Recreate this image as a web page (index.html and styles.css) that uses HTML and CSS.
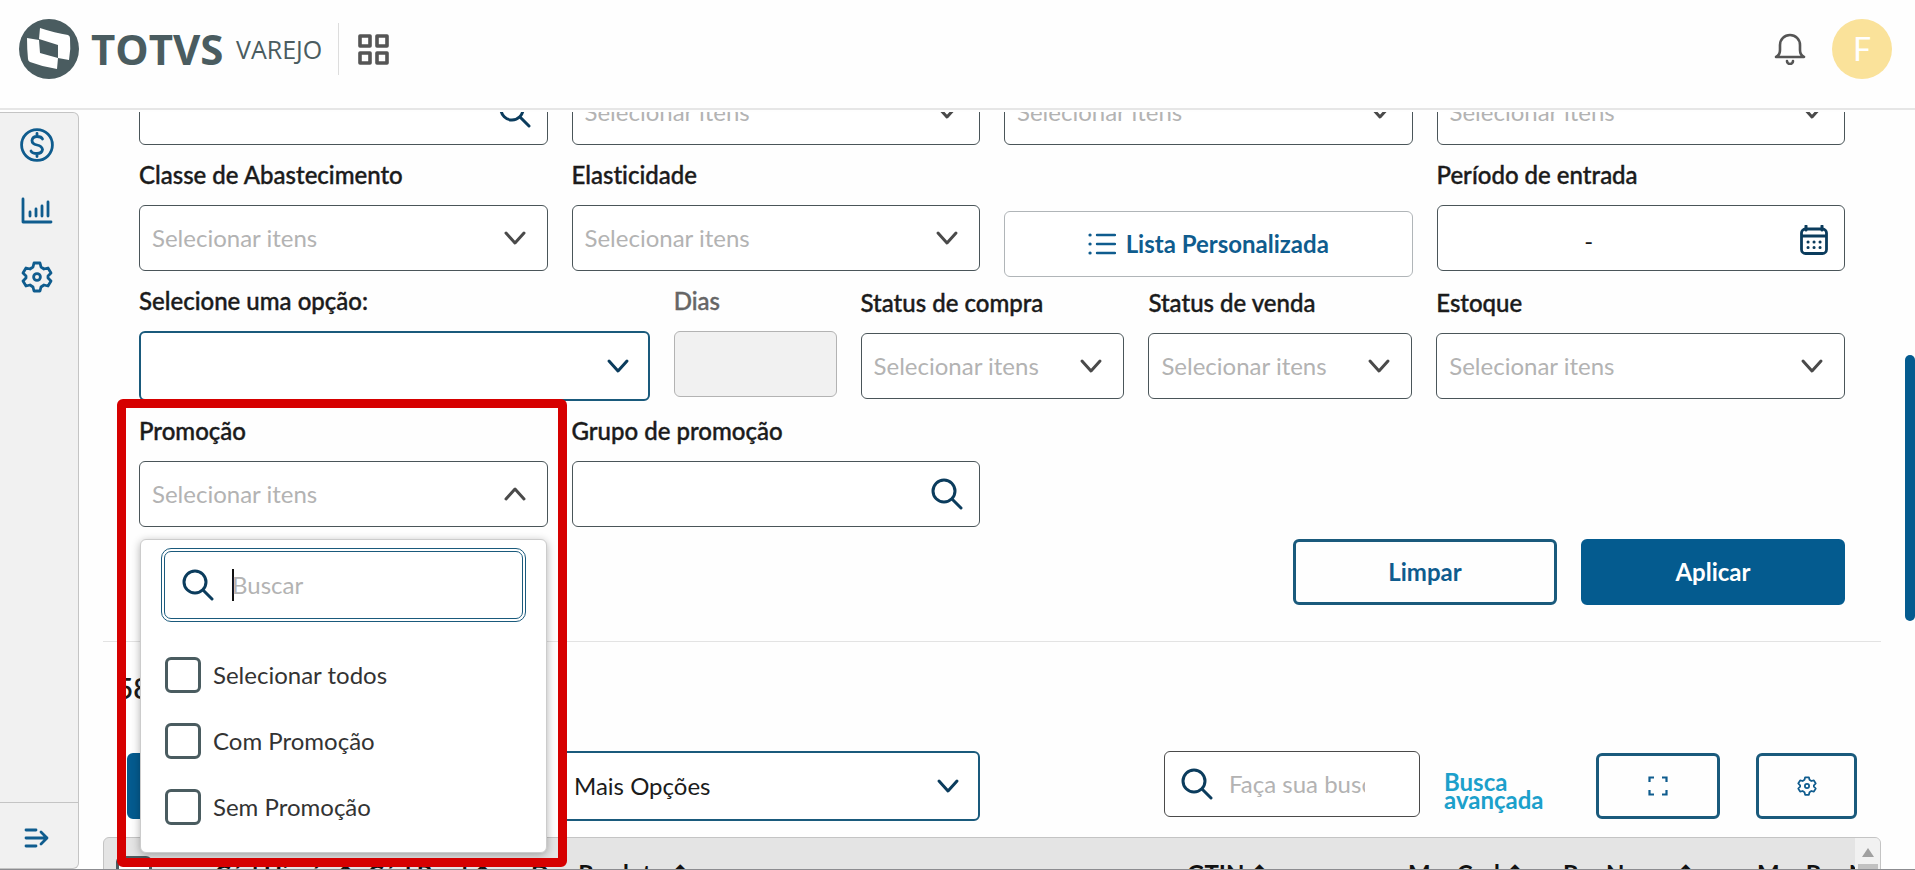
FILE: index.html
```html
<!DOCTYPE html>
<html lang="pt-BR">
<head>
<meta charset="utf-8">
<title>TOTVS Varejo</title>
<link rel="stylesheet" href="styles.css">
</head>
<body>
<svg class="sprite" aria-hidden="true">
  <symbol id="chevron" viewBox="0 0 24 24"><path d="M3 7l9 10 9-10" fill="none" stroke="currentColor" stroke-width="3" stroke-linecap="round" stroke-linejoin="round"/></symbol>
  <symbol id="search" viewBox="0 0 32 32"><circle cx="13" cy="13" r="11" fill="none" stroke="currentColor" stroke-width="3"/><path d="M21 21l9 9" stroke="currentColor" stroke-width="3" stroke-linecap="round"/></symbol>
  <symbol id="gear" viewBox="0 0 32 32"><path d="M13 2h6l1 4 3 2 4-1 3 5-3 3v2l3 3-3 5-4-1-3 2-1 4h-6l-1-4-3-2-4 1-3-5 3-3v-2l-3-3 3-5 4 1 3-2z" fill="none" stroke="currentColor" stroke-width="2.8" stroke-linejoin="round"/><circle cx="16" cy="16" r="3.4" fill="none" stroke="currentColor" stroke-width="2.8"/></symbol>
</svg>

<header class="topbar">
  <svg class="mark" viewBox="0 0 60 60" aria-hidden="true"><circle cx="30" cy="30" r="30" fill="#4a5c60"/><path d="M21 9q15 5 28 7 2 1 2 3 1 11-1 22l-11-2V26L20 20z" fill="#fff"/><path d="M8 19q6 1 12 2l1 13 18 5-1 11q-14-2-27-7-2-1-2-3Q8 30 8 19z" fill="#fff"/></svg>
  <span class="brand">TOTVS</span>
  <span class="product">VAREJO</span>
  <button class="apps" aria-label="Aplicativos"><svg viewBox="0 0 32 32"><path d="M3 3h10v10H3zM20 3h10v10H20zM3 20h10v10H3zM20 20h10v10H20z" fill="none" stroke="#555" stroke-width="3.6" stroke-linejoin="round"/></svg></button>
  <button class="bell" aria-label="Notificações"><svg viewBox="0 0 32 32"><path d="M2 24q4-2 4-7v-5a10 10 0 0 1 20 0v5q0 5 4 7z" fill="none" stroke="#555" stroke-width="2.6" stroke-linejoin="round"/><path d="M13 28a3 3 0 0 0 6 0" fill="none" stroke="#555" stroke-width="2.6" stroke-linecap="round"/></svg></button>
  <span class="avatar">F</span>
</header>

<div class="body">
  <nav class="side">
    <a href="#" aria-label="Preços"><svg class="i34" viewBox="0 0 34 34"><circle cx="17" cy="17" r="15.4" fill="none" stroke="currentColor" stroke-width="2.8"/><path d="M22.500 11q-1-2.500-5.500-2.500t-5 4q0 3.500 5 4.500t5.500 4.500q-.5 4-5.500 4t-6-2.500M17 5.500v3M17 25.500v3" fill="none" stroke="currentColor" stroke-width="2.800" stroke-linecap="round"/></svg></a>
    <a href="#" aria-label="Relatórios"><svg class="i32" viewBox="0 0 32 32"><path d="M2 4v23h28M9 21v-4M15 21v-7M21 21V11M27 21V7" fill="none" stroke="currentColor" stroke-width="2.8" stroke-linecap="round" stroke-linejoin="round"/></svg></a>
    <a href="#" aria-label="Configurações"><svg class="i32"><use href="#gear"/></svg></a>
    <button class="expand" aria-label="Expandir menu"><svg viewBox="0 0 26 22"><path d="M2 3h10M2 11h21M2 19h10M17 5l6 6-6 6" fill="none" stroke="currentColor" stroke-width="2.800" stroke-linecap="round" stroke-linejoin="round"/></svg></button>
  </nav>

  <main class="main">
    <form class="filters">
      <div class="row four scrolled">
        <div class="box"><input aria-label="Pesquisa"><svg class="lens"><use href="#search"/></svg></div>
        <button type="button" class="box">Selecionar itens<svg class="chev"><use href="#chevron"/></svg></button>
        <button type="button" class="box">Selecionar itens<svg class="chev"><use href="#chevron"/></svg></button>
        <button type="button" class="box">Selecionar itens<svg class="chev"><use href="#chevron"/></svg></button>
      </div>

      <div class="row four compact">
        <div class="field"><label for="classe">Classe de Abastecimento</label><button type="button" id="classe" class="box">Selecionar itens<svg class="chev"><use href="#chevron"/></svg></button></div>
        <div class="field"><label for="elast">Elasticidade</label><button type="button" id="elast" class="box">Selecionar itens<svg class="chev"><use href="#chevron"/></svg></button></div>
        <button type="button" class="box custom"><svg viewBox="0 0 28 24"><path d="M9 3h18M9 12h18M9 21h18" stroke="currentColor" stroke-width="2.400" stroke-linecap="round"/><path d="M2 3h.1M2 12h.1M2 21h.1" stroke="currentColor" stroke-width="3.200" stroke-linecap="round"/></svg>Lista Personalizada</button>
        <div class="field"><label for="periodo">Período de entrada</label><div class="box date"><input id="periodo" value="-"><svg viewBox="0 0 28 30"><path d="M6 1v4M22 1v4" stroke="currentColor" stroke-width="3" stroke-linecap="round"/><rect x="1.500" y="4" width="25" height="24.500" rx="4" fill="none" stroke="currentColor" stroke-width="2.800"/><path d="M1 11h26" stroke="currentColor" stroke-width="3"/><path d="M8 17h.1M14 17h.1M20 17h.1M8 22.500h.1M14 22.500h.1M20 22.500h.1" stroke="currentColor" stroke-width="3" stroke-linecap="round"/></svg></div></div>
      </div>

      <div class="row five">
        <div class="field"><label for="opcao">Selecione uma opção:</label><div class="box strong"><select id="opcao"><option></option></select><svg class="chev"><use href="#chevron"/></svg></div></div>
        <div class="field"><label for="dias" class="muted">Dias</label><input id="dias" class="box disabled" disabled></div>
        <div class="field low"><label for="compra">Status de compra</label><button type="button" id="compra" class="box">Selecionar itens<svg class="chev"><use href="#chevron"/></svg></button></div>
        <div class="field low"><label for="venda">Status de venda</label><button type="button" id="venda" class="box">Selecionar itens<svg class="chev"><use href="#chevron"/></svg></button></div>
        <div class="field low"><label for="estoque">Estoque</label><button type="button" id="estoque" class="box">Selecionar itens<svg class="chev"><use href="#chevron"/></svg></button></div>
      </div>

      <div class="row four">
        <div class="field anchor">
          <label for="promo">Promoção</label>
          <button type="button" id="promo" class="box">Selecionar itens<svg class="chev up"><use href="#chevron"/></svg></button>
          <div class="popup">
            <div class="find"><svg class="lens"><use href="#search"/></svg><span class="caret"></span><input placeholder="Buscar" aria-label="Buscar"></div>
            <label class="opt"><input type="checkbox">Selecionar todos</label>
            <label class="opt"><input type="checkbox">Com Promoção</label>
            <label class="opt"><input type="checkbox">Sem Promoção</label>
          </div>
          <div class="highlight"></div>
        </div>
        <div class="field"><label for="grupo">Grupo de promoção</label><div class="box"><input id="grupo"><svg class="lens"><use href="#search"/></svg></div></div>
      </div>

      <div class="actions"><button type="button" class="btn">Limpar</button><button type="button" class="btn primary">Aplicar</button></div>
    </form>

    <section class="results">
      <h2>58</h2>
      <div class="tools">
        <button class="btn primary first" aria-label="Exportar"></button>
        <div class="box strong more"><select aria-label="Mais Opções"><option>Mais Opções</option></select><svg class="chev"><use href="#chevron"/></svg></div>
        <div class="box query"><svg class="lens"><use href="#search"/></svg><input placeholder="Faça sua busca" aria-label="Faça sua busca"></div>
        <a href="#" class="adv">Busca avançada</a>
        <button class="btn full" aria-label="Tela cheia"><svg viewBox="0 0 20 20"><path d="M1.500 6V1.500H6M14 1.500h4.500V6M18.500 14v4.500H14M6 18.500H1.500V14" fill="none" stroke="currentColor" stroke-width="2.200"/></svg></button>
        <button class="btn conf" aria-label="Configurar tabela"><svg><use href="#gear"/></svg></button>
      </div>
      <div class="grid">
        <table>
          <thead><tr>
            <th class="c-check"><input type="checkbox" aria-label="Selecionar tudo"></th>
            <th class="c-a">Cód Hierár ↑</th><th class="c-b">Cód Prod ↑</th><th class="c-c">Des Produto ↑</th>
            <th class="c-d">GTIN ↑</th><th class="c-e">Mar Cod ↑</th><th class="c-f">Pro Nome ↑</th><th>Mar Pro Nome</th>
          </tr></thead>
        </table>
        <div class="track"><svg viewBox="0 0 12 9"><path d="M6 0l6 9H0z" fill="#a0a0a0"/></svg><span></span></div>
      </div>
    </section>
  </main>
  <div class="thumb"></div>
</div>
</body>
</html>
```

FILE: styles.css
```css
* { box-sizing: border-box; }
body { margin: 0; height: 100vh; display: flex; flex-direction: column; overflow: hidden; background: #fefefe; color: #1b1b1b; font: 24px/32px Lato, "Noto Sans", sans-serif; font-variant-ligatures: none; }
button, input, select { font: inherit; color: inherit; border: 0; background: none; padding: 0; margin: 0; outline: 0; min-width: 0; }
svg { display: block; flex: none; }
.sprite { position: absolute; width: 0; height: 0; }

.topbar { flex: none; height: 110px; display: flex; align-items: center; padding: 0 23px 10px 19px; border-bottom: 2px solid #e6e6e6; }
.mark { width: 60px; height: 60px; }
.brand { width: 133px; margin-left: 12px; color: #4a5c60; font: 700 42px/60px "Open Sans", sans-serif; }
.product { width: 102px; margin-left: 12px; color: #4a5c60; font: 400 25px/60px "Open Sans", sans-serif; }
.apps { padding: 10px 18px; height: 52px; border-left: 1px solid #ddd; }
.apps svg { width: 32px; height: 32px; }
.bell { margin-left: auto; }
.bell svg { width: 32px; height: 32px; }
.avatar { width: 60px; height: 60px; margin-left: 26px; border-radius: 50%; background: #fae29a; color: #fff; font-size: 32px; line-height: 60px; text-align: center; }

.body { flex: 1; min-height: 0; display: flex; padding-top: 2px; border-bottom: 1px solid #8c8c90; position: relative; }
.side { width: 79px; flex: none; display: flex; flex-direction: column; align-items: center; gap: 32px; padding: 15px 4px 0 0; background: #f1f1f1; border: 1px solid #c4c4c4; border-left: 0; border-radius: 0 6px 6px 0; color: #0f5c8e; }
.side a { color: inherit; height: 34px; display: flex; align-items: center; }
.i34 { width: 34px; height: 34px; }
.i32 { width: 32px; height: 32px; }
.expand { margin: auto -4px 0 0; width: 78px; height: 66px; display: flex; align-items: center; justify-content: center; padding: 4px 4px 0 0; border-top: 1px solid #c4c4c4; }
.expand svg { width: 26px; height: 22px; }

.main { flex: 1; min-width: 0; overflow: hidden; padding: 0 34px 0 24px; }
.filters { padding: 0 36px 36px; border-bottom: 1px solid #e3e3e3; }
.row { display: grid; column-gap: 24px; align-items: start; }
.four { grid-template-columns: repeat(4, minmax(0, 1fr)); }
.five { grid-template-columns: 511fr 163fr 264fr 264fr 409fr; }
.scrolled { margin-top: -33px; }
.compact { margin-bottom: -6px; }
.field { padding-top: 14px; min-width: 0; }
.low { padding-top: 16px; }
.field > label { display: block; height: 32px; margin-bottom: 14px; font-weight: 500; -webkit-text-stroke: 0.4px currentColor; white-space: nowrap; }
.field > .muted { color: #666; }
.box { width: 100%; height: 66px; display: flex; align-items: center; padding: 0 20px 0 12px; border: 1px solid #4a5559; border-radius: 6px; background: #fff; color: #b3b3b3; text-align: left; white-space: nowrap; }
.box > input, .box > select { flex: 1; height: 100%; }
.box > select { appearance: none; color: #1b1b1b; }
.chev { width: 24px; height: 24px; margin-left: auto; color: #4a4a4a; }
.up { transform: rotate(180deg); }
.lens { width: 32px; height: 32px; color: #0b3c5d; }
.box > input + .lens { margin-right: -4px; }
.strong { height: 70px; padding-right: 18px; border: 2px solid #1a5a7c; }
.strong .chev { color: #0b3c5d; }
.disabled { border-color: #b3b3b3; background: #f1f1f1; }
.custom { margin-top: 66px; justify-content: center; gap: 10px; padding: 0; border-color: #b0b5b8; color: #0f5c8e; font-weight: 700; }
.custom svg { width: 28px; height: 24px; }
.date { padding: 4px 16px 0 12px; color: #0b3c5d; }
.date input { padding-right: 72px; text-align: center; color: #1b1b1b; }
.date svg { width: 28px; height: 30px; }

.btn { height: 66px; display: flex; align-items: center; justify-content: center; border: 3px solid #1a5a7c; border-radius: 6px; color: #0f5c8e; font-weight: 700; }
.primary { border-color: #045b8f; background: #045b8f; color: #fff; }
.actions { display: flex; justify-content: flex-end; gap: 24px; padding-top: 12px; }
.actions .btn { width: 264px; }

.anchor { position: relative; }
.popup { position: absolute; z-index: 2; top: 138px; left: 1px; right: 1px; height: 314px; padding: 8px 20px; border: 1px solid #ccc; border-radius: 6px; background: #fff; box-shadow: 0 2px 8px rgba(0,0,0,.3); }
.find { height: 74px; margin-bottom: 20px; display: flex; align-items: center; gap: 18px; padding-left: 17px; border: 4px double #1a5a7c; border-radius: 10px; }
.find input { flex: 1; margin-left: -20px; }
.caret { width: 2px; height: 32px; background: #111; }
::placeholder { color: #b3b3b3; opacity: 1; }
.opt { height: 66px; display: flex; align-items: center; gap: 12px; padding-left: 4px; color: #333; }
input[type=checkbox] { appearance: none; flex: none; width: 36px; height: 36px; border: 3px solid #4a5c60; border-radius: 6px; background: #fff; }
.highlight { position: absolute; z-index: 3; top: -2px; left: -22px; right: -19px; height: 468px; border: 9px solid #d60000; border-radius: 6px; pointer-events: none; }

.results h2 { margin: 0; padding: 28px 0 0 14px; font-size: 28px; line-height: 36px; font-weight: 600; }
.tools { height: 131px; display: flex; align-items: center; padding: 28px 24px 0 24px; }
.first { width: 392px; flex: none; }
.more { width: 420px; margin-left: 41px; margin-right: auto; }
.query { width: 256px; gap: 16px; margin-bottom: 4px; padding: 0 54px 0 16px; border-color: #4a4a4a; }
.adv { width: 112px; margin: 10px 40px 0 24px; color: #1ca0cb; font-weight: 700; line-height: 18px; text-decoration: none; }
.full { width: 124px; margin-right: 36px; }
.conf { width: 101px; }
.full svg, .conf svg { width: 20px; height: 20px; }
.conf svg { width: 22px; }
.grid { height: 120px; display: flex; border: 1px solid #c4c4c4; border-radius: 6px; background: #e4e4e4; overflow: hidden; }
.grid table { flex: 1; width: 100%; min-width: 0; height: 68px; table-layout: fixed; border-collapse: collapse; color: #111; }
th { height: 68px; padding: 4px 0 0; text-align: left; white-space: nowrap; overflow: hidden; font-weight: 700; }
th input { display: block; margin-left: 12px; }
.c-check { width: 111px; }
.c-a { width: 153px; }
.c-b { width: 163px; }
.c-c { width: 656px; }
.c-d { width: 221px; }
.c-e { width: 155px; }
.c-f { width: 194px; }
.track { width: 25px; flex: none; display: flex; flex-direction: column; align-items: center; gap: 7px; padding-top: 10px; background: #f1f1f1; }
.track svg { width: 12px; height: 9px; }
.track span { width: 20px; flex: 1; background: #c1c1c1; }
.thumb { position: absolute; right: 0; top: 245px; width: 10px; height: 266px; border-radius: 5px; background: #045b8f; }
```
